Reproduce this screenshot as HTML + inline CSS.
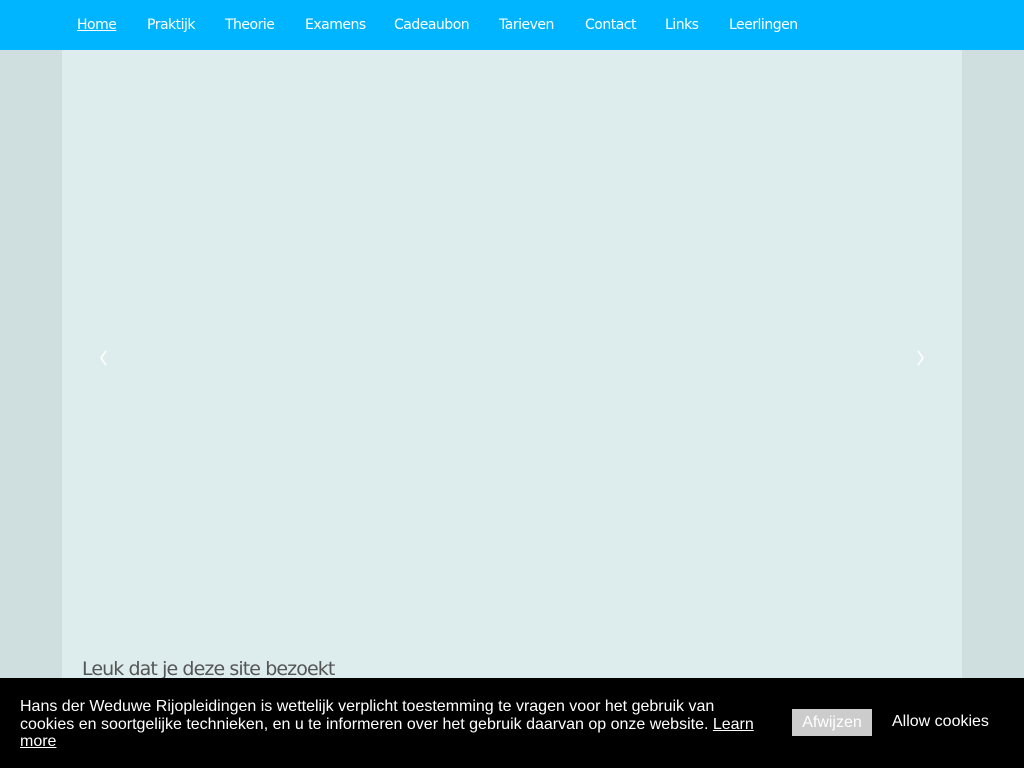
<!DOCTYPE html>
<html><head><meta charset="utf-8"><style>
*{margin:0;padding:0;box-sizing:border-box}
body{width:1024px;height:768px;overflow:hidden;background:#cfdfdf;font-family:"Liberation Sans",sans-serif;position:relative}
.nav{position:absolute;left:0;top:0;width:1024px;height:50px;background:#00b5ff}
.nav a{position:absolute;top:17px;color:#fff;font-size:14px;text-decoration:none;font-family:"DejaVu Sans","Liberation Sans",sans-serif;letter-spacing:-0.5px}
.main{position:absolute;left:62px;top:50px;width:900px;height:718px;background:#ddecec}
.h{position:absolute;left:82px;top:658px;font-size:19px;color:#555;font-family:"DejaVu Sans",sans-serif;letter-spacing:-0.9px}
.ck{position:absolute;left:0;top:678px;width:1024px;height:90px;background:#000;color:#fff}
.ck p{position:absolute;left:20px;top:20px;width:745px;font-size:16px;line-height:17.5px;letter-spacing:0}
.ck u{color:#fff}
.btn{position:absolute;left:792px;top:31px;width:80px;height:27px;background:#ccc;color:#fff;font-size:16px;text-align:center;line-height:27px}
.al{position:absolute;left:892px;top:35px;font-size:16px}
</style></head><body>
<div class="nav">
<a style="left:77px;text-decoration:underline">Home</a>
<a style="left:147px">Praktijk</a>
<a style="left:225px">Theorie</a>
<a style="left:305px">Examens</a>
<a style="left:394px">Cadeaubon</a>
<a style="left:499px">Tarieven</a>
<a style="left:585px">Contact</a>
<a style="left:665px">Links</a>
<a style="left:729px">Leerlingen</a>
</div>
<div class="main"></div>
<svg style="position:absolute;left:97px;top:349px" width="14" height="18"><path d="M9 2 L4 9 L9 16" stroke="#fff" stroke-width="1.6" fill="none"/></svg>
<svg style="position:absolute;left:913px;top:349px" width="14" height="18"><path d="M5 2 L10 9 L5 16" stroke="#fff" stroke-width="1.6" fill="none"/></svg>
<div class="h">Leuk dat je deze site bezoekt</div>
<div class="ck">
<p>Hans der Weduwe Rijopleidingen is wettelijk verplicht toestemming te vragen voor het gebruik van cookies en soortgelijke technieken, en u te informeren over het gebruik daarvan op onze website. <u>Learn more</u></p>
<div class="btn">Afwijzen</div>
<div class="al">Allow cookies</div>
</div>
</body></html>
